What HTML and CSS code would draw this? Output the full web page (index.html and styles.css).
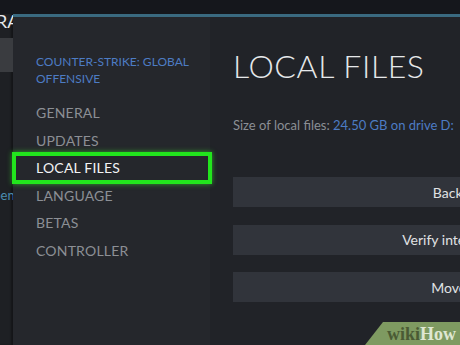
FILE: index.html
```html
<!DOCTYPE html>
<html lang="en">
<head>
    <meta charset="UTF-8">
    <meta name="viewport" content="width=device-width, initial-scale=1.0">
    <title>Properties - Local Files</title>
    <link rel="stylesheet" href="styles.css">
</head>
<body>
    <div class="page">
        <div class="backdrop">
            <div class="backdrop-top"></div>
            <div class="backdrop-title">LIBRARY</div>
            <div class="backdrop-search"></div>
            <div class="backdrop-link">Open</div>
        </div>
        <div class="dialog">
            <div class="sidebar">
                <div class="game-name">COUNTER-STRIKE: GLOBAL OFFENSIVE</div>
                <div class="nav">
                    <div class="nav-item">GENERAL</div>
                    <div class="nav-item">UPDATES</div>
                    <div class="nav-item active">LOCAL FILES</div>
                    <div class="nav-item">LANGUAGE</div>
                    <div class="nav-item">BETAS</div>
                    <div class="nav-item">CONTROLLER</div>
                </div>
            </div>
            <div class="content">
                <h1>LOCAL FILES</h1>
                <p class="size">Size of local files: <span class="size-value">24.50 GB on drive D:</span></p>
                <div class="actions">
                    <button>Backup game files...</button>
                    <button>Verify integrity of game files...</button>
                    <button>Move install folder...</button>
                </div>
            </div>
        </div>
    </div>
    <div class="badge"><span class="wiki">wiki</span><span class="how">How</span></div>
</body>
</html>
```

FILE: styles.css
```css
body {
    margin: 0;
    width: 460px;
    height: 345px;
    overflow: hidden;
    background-color: #15171c;
    font-family: Lato, "Open Sans", sans-serif;
    position: relative;
}
.page {
    display: flex;
    height: 345px;
}
.backdrop {
    width: 13px;
    flex-shrink: 0;
    overflow: hidden;
    background-color: #1e2024;
    box-shadow: inset -2px 0 2px rgba(0, 0, 0, 0.35);
}
.backdrop-top {
    height: 14px;
    background-color: #15171c;
}
.backdrop-title {
    white-space: nowrap;
    color: #e8eaec;
    font-size: 18px;
    line-height: 15px;
    margin-left: -30px;
}
.backdrop-search {
    height: 34px;
    margin-top: 9px;
    background-color: #3a3c40;
}
.backdrop-link {
    white-space: nowrap;
    color: #4b8db0;
    font-size: 13px;
    margin-top: 115px;
    margin-left: -17px;
}
.dialog {
    flex: 1;
    display: flex;
    margin-top: 14px;
    border-top: 3px solid #3a6a80;
    background-color: #212328;
    min-width: 0;
}
.sidebar {
    width: 197px;
    flex-shrink: 0;
    background-color: #25272c;
    padding-top: 36px;
}
.game-name {
    color: #4d7cc4;
    font-size: 12px;
    line-height: 17px;
    padding: 0 10px 0 23px;
}
.nav {
    margin-top: 12px;
}
.nav-item {
    height: 27.5px;
    line-height: 27.5px;
    padding-left: 23px;
    color: #8c8f95;
    font-size: 14px;
    letter-spacing: 0.2px;
}
.nav-item.active {
    color: #f2f3f4;
    outline: 4px solid #22e51d;
    outline-offset: -2px;
    box-shadow: 0 0 5px 2px rgba(60, 240, 50, 0.6);
    margin-left: 1px;
    padding-left: 22px;
}
.content {
    flex: 1;
    padding-left: 23px;
    min-width: 0;
}
h1 {
    margin: 33px 0 0;
    font-size: 32px;
    font-weight: 300;
    letter-spacing: 0.6px;
    color: #e6e8ea;
    line-height: 32px;
}
.size {
    margin: 35px 0 0;
    font-size: 13px;
    color: #8b8f95;
    white-space: nowrap;
}
.size-value {
    color: #4d7cc4;
}
.actions {
    display: flex;
    flex-direction: column;
    gap: 17.5px;
    margin-top: 44px;
    width: 520px;
}
button {
    height: 30px;
    border: none;
    background-color: #31343b;
    color: #e0e2e4;
    font-family: Lato, "Open Sans", sans-serif;
    font-size: 14px;
    padding: 0;
}
.badge {
    position: absolute;
    right: 0;
    bottom: 0;
    width: 95px;
    height: 23px;
    background-color: #7e9a61;
    clip-path: polygon(18px 0, 100% 0, 100% 100%, 0 100%);
    font-family: "Liberation Serif", serif;
    font-weight: bold;
    font-size: 18px;
    line-height: 24px;
    padding-left: 22px;
    box-sizing: border-box;
}
.wiki {
    color: #4a5a34;
}
.how {
    color: #dfe7d2;
}
```
